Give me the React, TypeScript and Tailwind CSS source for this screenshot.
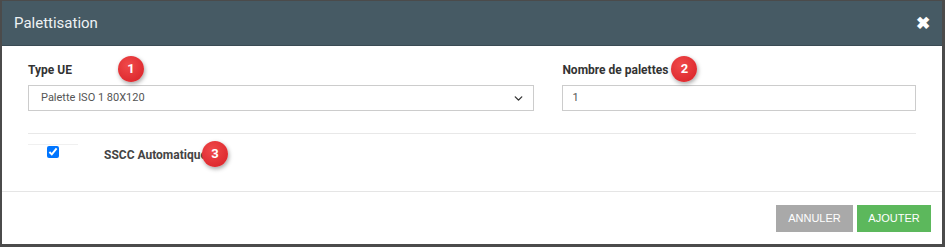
import { ChevronDown } from "lucide-react";

const roboto = "font-['Roboto',_'Liberation_Sans',_sans-serif]";

function Badge({ n, className }: { n: number; className: string }) {
  return (
    <span
      className={`absolute flex h-[26px] w-[26px] items-center justify-center rounded-full bg-[radial-gradient(circle_at_40%_35%,#f04a4a,#d71f26)] text-[13px] font-bold text-white shadow-[1px_2px_4px_rgba(0,0,0,0.35)] ${className}`}
    >
      {n}
    </span>
  );
}

export default function App() {
  return (
    <div className="h-[247px] w-[945px] bg-[#4b4b4b] pb-[3px] pl-[2px] pr-[3px] pt-[1px]">
      <div className={`flex h-full flex-col bg-white ${roboto}`}>
        <div className="flex h-[45px] shrink-0 items-center justify-between border-b border-[#3a4b54] bg-[#465a64] pl-[12px] pr-[12px]">
          <span className="text-[15px] text-[#eef2f4]">Palettisation</span>
          <span className="text-[17px] font-bold leading-none text-white">✖</span>
        </div>

        <div className="px-[26px] pt-[15px]">
          <div className="flex gap-[28px]">
            <div className="w-[507px]">
              <div className="relative w-fit text-[12px] font-bold leading-[18px] text-[#333]">
                Type UE
                <Badge n={1} className="left-[calc(100%+46px)] top-[-5px]" />
              </div>
              <div className="mt-[6px] flex h-[26px] items-center justify-between border border-[#ccc] pl-[12px] pr-[8px] text-[11px] text-[#555]">
                <span>Palette ISO 1 80X120</span>
                <ChevronDown size={13} strokeWidth={2.5} className="text-[#333]" />
              </div>
            </div>
            <div className="w-[354px]">
              <div className="relative w-fit text-[12px] font-bold leading-[18px] text-[#333]">
                Nombre de palettes
                <Badge n={2} className="left-[calc(100%+3px)] top-[-5px]" />
              </div>
              <div className="mt-[6px] flex h-[26px] items-center border border-[#ccc] pl-[9px] text-[11px] text-[#555]">
                1
              </div>
            </div>
          </div>

          <div className="mt-[22px] border-t border-[#e8e8e8]" />

          <div className="mt-[10px] flex items-start">
            <div className="flex h-[20px] w-[50px] justify-center border-t border-[#f0f0f0] pt-[1px]">
              <input type="checkbox" defaultChecked className="h-[12px] w-[12px]" />
            </div>
            <div className="relative ml-[26px] mt-[2px] w-fit text-[12px] font-bold leading-[18px] text-[#444]">
              SSCC Automatique
              <Badge n={3} className="left-[calc(100%-5px)] top-[-5px]" />
            </div>
          </div>
        </div>

        <div className="mt-auto flex h-[53px] items-start justify-end gap-[4px] border-t border-[#e5e5e5] pr-[11px] pt-[13px] font-['Liberation_Sans',_Arial,_sans-serif]">
          <button className="h-[27px] w-[77px] bg-[#a9a9a9] text-[11px] text-white">ANNULER</button>
          <button className="h-[27px] w-[74px] bg-[#5cb85c] text-[11px] text-white">AJOUTER</button>
        </div>
      </div>
    </div>
  );
}
